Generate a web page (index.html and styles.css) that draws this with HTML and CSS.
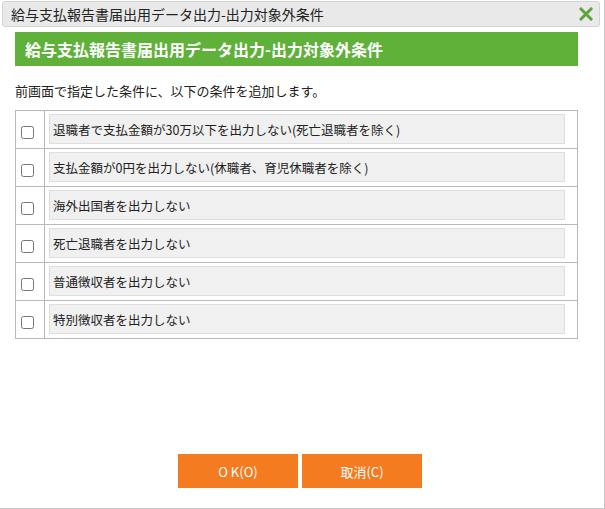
FILE: index.html
```html
<!DOCTYPE html>
<html lang="ja">
<head>
    <meta charset="UTF-8">
    <title>給与支払報告書届出用データ出力-出力対象外条件</title>
    <link rel="stylesheet" href="styles.css">
</head>
<body>
    <div class="dialog">
        <div class="title-bar">
            <span class="title-text">給与支払報告書届出用データ出力-出力対象外条件</span>
            <span class="close-btn">
                <svg width="14" height="14" viewBox="0 0 14 14">
                    <path d="M2 2 L12 12 M12 2 L2 12" stroke="#5fa33f" stroke-width="3" stroke-linecap="square"/>
                </svg>
            </span>
        </div>
        <div class="content">
            <div class="page-header">給与支払報告書届出用データ出力-出力対象外条件</div>
            <p class="lead">前画面で指定した条件に、以下の条件を追加します。</p>
            <table class="cond-table">
                <tr>
                    <td class="check-cell"><input type="checkbox"></td>
                    <td><div class="cond-label">退職者で支払金額が30万以下を出力しない(死亡退職者を除く)</div></td>
                </tr>
                <tr>
                    <td class="check-cell"><input type="checkbox"></td>
                    <td><div class="cond-label">支払金額が0円を出力しない(休職者、育児休職者を除く)</div></td>
                </tr>
                <tr>
                    <td class="check-cell"><input type="checkbox"></td>
                    <td><div class="cond-label">海外出国者を出力しない</div></td>
                </tr>
                <tr>
                    <td class="check-cell"><input type="checkbox"></td>
                    <td><div class="cond-label">死亡退職者を出力しない</div></td>
                </tr>
                <tr>
                    <td class="check-cell"><input type="checkbox"></td>
                    <td><div class="cond-label">普通徴収者を出力しない</div></td>
                </tr>
                <tr>
                    <td class="check-cell"><input type="checkbox"></td>
                    <td><div class="cond-label">特別徴収者を出力しない</div></td>
                </tr>
            </table>
            <div class="buttons">
                <button class="btn">O K(O)</button>
                <button class="btn">取消(C)</button>
            </div>
        </div>
    </div>
</body>
</html>
```

FILE: styles.css
```css
html, body {
    margin: 0;
    padding: 0;
    background: #fff;
}
body {
    font-family: "Noto Sans CJK JP", "Noto Sans", sans-serif;
    color: #222;
}
.dialog {
    width: 604px;
    height: 508px;
    border-right: 1px solid #c8c8c8;
    border-bottom: 1px solid #c8c8c8;
    display: flex;
    flex-direction: column;
}
.title-bar {
    margin: 1px 4px 0 2px;
    height: 24px;
    border: 1px solid #d4d4d4;
    border-radius: 3px;
    background: #e9e9e9;
    display: flex;
    align-items: center;
    justify-content: space-between;
    padding: 0 6px 0 8px;
}
.title-text {
    font-size: 14px;
    color: #222;
}
.close-btn {
    display: flex;
    align-items: center;
}
.content {
    flex-grow: 1;
    display: flex;
    flex-direction: column;
    padding: 5px 26px 0 15px;
}
.page-header {
    height: 34px;
    background: #5fb139;
    color: #fff;
    font-size: 16px;
    font-weight: bold;
    display: flex;
    align-items: center;
    padding-left: 10px;
}
.lead {
    margin: 16px 0 0 0;
    font-size: 13px;
    line-height: 17px;
    height: 17px;
}
.cond-table {
    margin-top: 11px;
    border-collapse: collapse;
    width: 100%;
    border: 1px solid #b9b9b9;
}
.cond-table td {
    border-top: 1px solid #b9b9b9;
    padding: 3px 12px 4px 4px;
}
.cond-table .check-cell {
    width: 23px;
    padding: 0 0 0 5px;
    border-right: 1px solid #b9b9b9;
    text-align: left;
}
.check-cell input {
    margin: 0;
    width: 13px;
    height: 13px;
    vertical-align: middle;
}
.cond-label {
    box-sizing: border-box;
    height: 30px;
    background: #f0f0f0;
    border: 1px solid #dedede;
    font-size: 12.5px;
    display: flex;
    align-items: center;
    padding-left: 3px;
}
.buttons {
    margin-top: auto;
    margin-bottom: 20px;
    display: flex;
    justify-content: center;
    gap: 4px;
    padding-left: 7px;
}
.btn {
    width: 120px;
    height: 34px;
    border: none;
    background: #f57b20;
    color: #fff;
    font-family: "Noto Sans CJK JP", "Noto Sans", sans-serif;
    font-size: 13px;
    cursor: pointer;
}
```
